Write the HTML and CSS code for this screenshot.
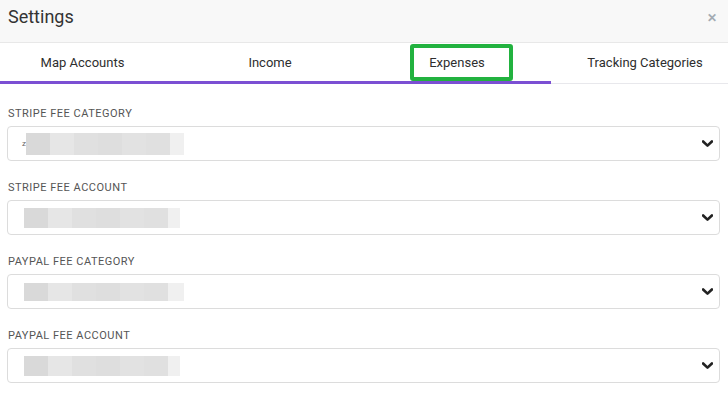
FILE: index.html
```html
<!DOCTYPE html>
<html>
<head>
<meta charset="utf-8">
<link rel="stylesheet" href="styles.css">
</head>
<body>
<div class="modal">
  <div class="header">
    <div class="title">Settings</div>
    <div class="close">&#x2715;</div>
  </div>
  <div class="tabs">
    <div class="tab tab-1 active">Map Accounts</div>
    <div class="tab tab-2 active">Income</div>
    <div class="tab tab-3 active">Expenses<span class="highlight"></span></div>
    <div class="tab tab-4">Tracking Categories</div>
  </div>
  <div class="form">
    <div class="group">
      <div class="label">Stripe Fee Category</div>
      <div class="select select-first"><span class="stub">z</span><span class="blur b1"></span><svg class="chev" viewBox="0 0 10 7"><path d="M1 1.2 L5 5 L9 1.2" /></svg></div>
    </div>
    <div class="group">
      <div class="label">Stripe Fee Account</div>
      <div class="select"><span class="blur b2"></span><svg class="chev" viewBox="0 0 10 7"><path d="M1 1.2 L5 5 L9 1.2" /></svg></div>
    </div>
    <div class="group">
      <div class="label">PayPal Fee Category</div>
      <div class="select"><span class="blur b3"></span><svg class="chev" viewBox="0 0 10 7"><path d="M1 1.2 L5 5 L9 1.2" /></svg></div>
    </div>
    <div class="group">
      <div class="label">PayPal Fee Account</div>
      <div class="select"><span class="blur b4"></span><svg class="chev" viewBox="0 0 10 7"><path d="M1 1.2 L5 5 L9 1.2" /></svg></div>
    </div>
  </div>
</div>
</body>
</html>
```
FILE: styles.css
```css
* { box-sizing: border-box; }
html, body { margin: 0; padding: 0; background: #fff; }
body { font-family: Roboto, "Liberation Sans", sans-serif; color: #333; width: 728px; height: 394px; overflow: hidden; }

.header {
  height: 43px;
  background: #f8f8f8;
  border-bottom: 1px solid #e8e8e8;
  display: flex;
  align-items: center;
  justify-content: space-between;
  padding: 0 11px 0 8px;
}
.title { font-size: 18px; color: #333; line-height: 22px; margin-top: -8px; }
.close { font-size: 12px; font-weight: 700; color: #a3abb3; margin-top: -6px; }

.tabs {
  display: grid;
  grid-template-columns: 165px 210px 176px 1fr;
  height: 41px;
}
.tab {
  position: relative;
  font-size: 13px;
  font-weight: 400;
  color: #2e2e2e;
  display: flex;
  align-items: center;
  justify-content: center;
  border-bottom: 1px solid #e8e8ec;
  padding-top: 1px;
}
.tab.active { border-bottom: 3px solid #7b4fd3; }
.tab-3 { padding-right: 12px; }
.tab-4 { padding-left: 11px; padding-bottom: 2px; }
.highlight {
  position: absolute;
  left: 35px;
  top: 1px;
  width: 103px;
  height: 37px;
  border: 4px solid #22b23f;
  border-radius: 3px;
}

.form { padding: 23px 8px 0 7px; }
.group { margin-bottom: 20px; }
.label {
  font-size: 11px;
  line-height: 14px;
  letter-spacing: 0.5px;
  text-transform: uppercase;
  color: #555;
  margin-bottom: 5px;
  padding-left: 1px;
}
.select {
  position: relative;
  height: 35px;
  border: 1px solid #dcdcdc;
  border-radius: 4px;
  display: flex;
  align-items: center;
  padding-left: 16px;
}
.select-first { padding-left: 14px; }
.stub { font-size: 8px; color: #666; }
.blur {
  display: block;
  width: 156px;
  height: 20px;
  background: linear-gradient(to right,
    #d9d9d9 0 24px, #e6e6e6 24px 48px, #e0e0e0 48px 72px, #dedede 72px 96px,
    #e2e2e2 96px 120px, #e0e0e0 120px 144px, #f0f0f0 144px 156px);
}
.b1 { height: 22px; width: 158px; }
.b3 { width: 160px; height: 18px; }
.chev {
  position: absolute;
  right: 6px;
  top: 13px;
  width: 11px;
  height: 8px;
}
.chev path { fill: none; stroke: #222; stroke-width: 2.4; stroke-linecap: round; stroke-linejoin: round; }
```
